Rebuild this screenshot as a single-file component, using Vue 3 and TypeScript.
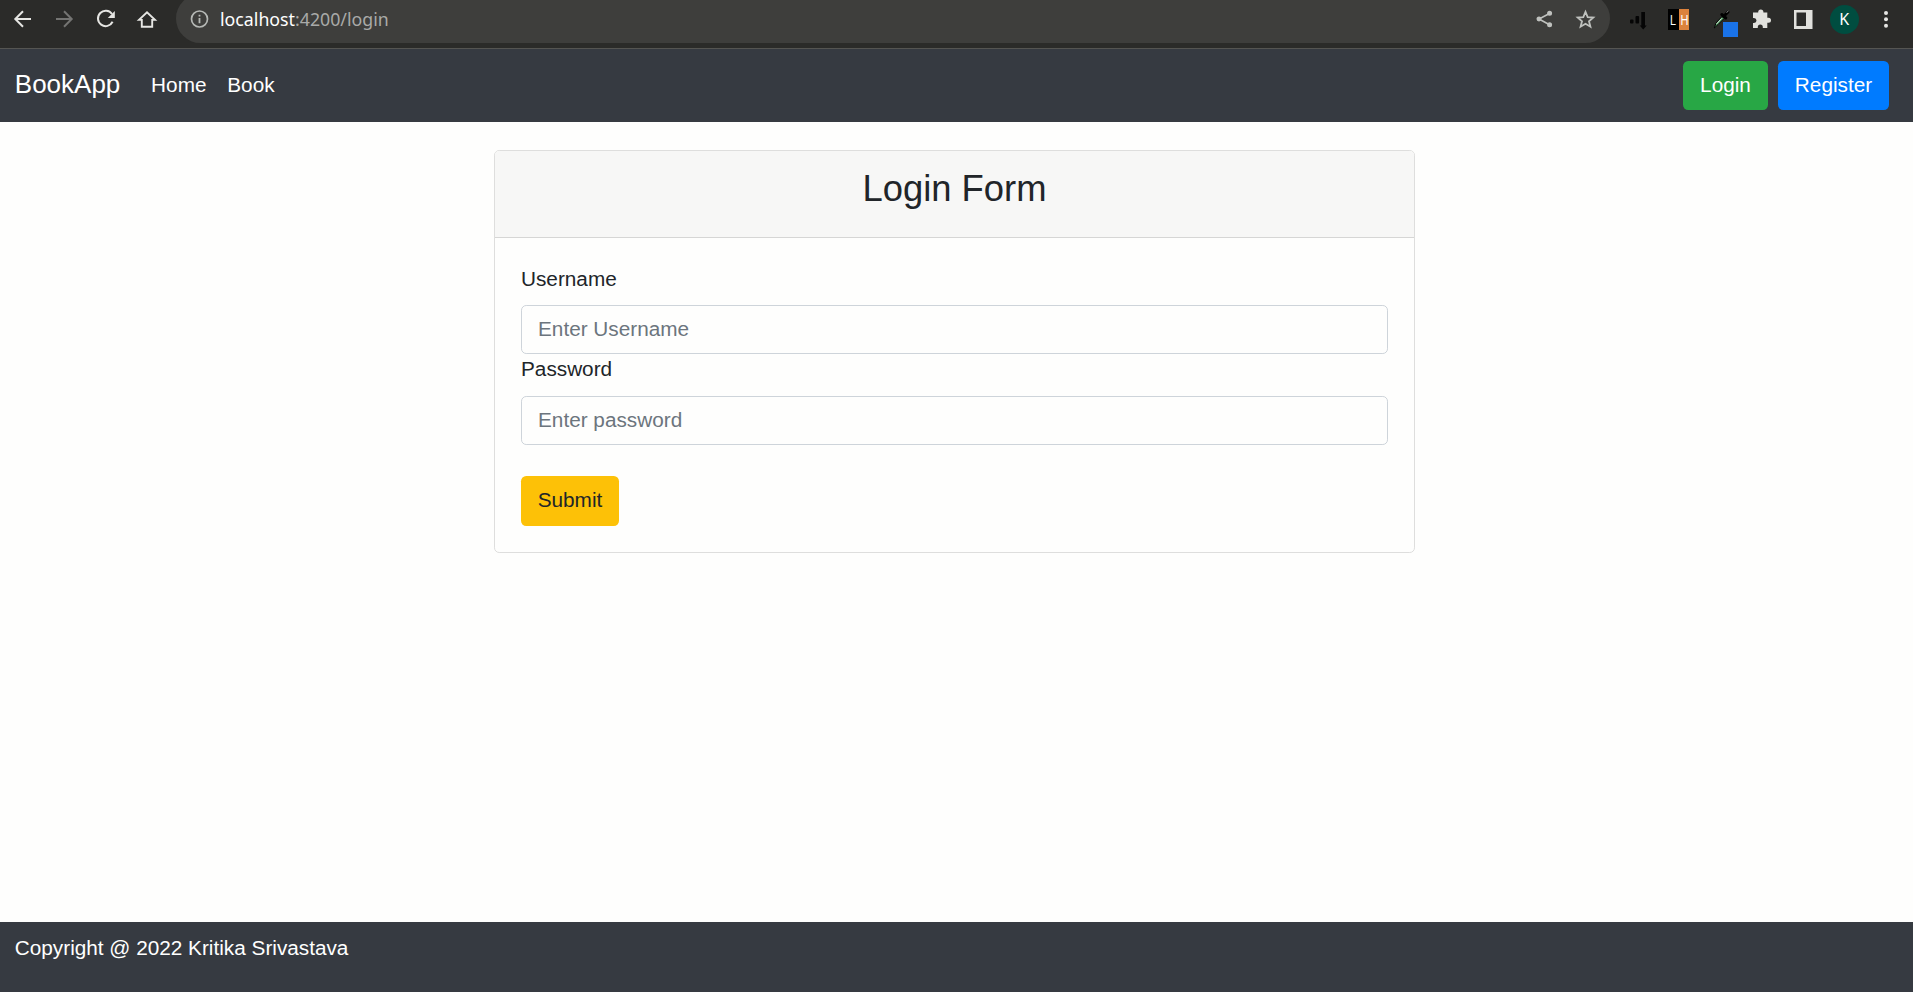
<script setup lang="ts">
import { ref } from 'vue'

const username = ref('')
const password = ref('')
const links: string[] = ['Home', 'Book']
</script>

<template>
  <div class="window">
    <div class="toolbar">
      <svg class="icons-left" width="176" height="48" viewBox="0 0 176 48" fill="none" stroke="#e6e6e3" stroke-width="2">
        <path d="M31 19H15.500M23 11.300L15.300 19L23 26.700" />
        <path d="M56 19H71.500M64 11.300L71.700 19L64 26.700" stroke="#747472" />
        <path d="M112 14A7.700 7.700 0 1 0 112.600 21.800" />
        <path d="M114.800 11V18H107.800Z" fill="#e6e6e3" stroke="none" />
        <path d="M139 19.900H141.800V26.800H152.200V19.900H155L147 12.200Z" stroke-width="1.900" />
      </svg>
      <div class="address">
        <svg width="20" height="20" viewBox="0 0 20 20">
          <circle cx="10.500" cy="10" r="8" fill="none" stroke="#b5b8b5" stroke-width="1.700" />
          <path d="M9.600 5.800H11.400V7.600H9.600ZM9.600 9H11.400V14.300H9.600Z" fill="#b5b8b5" />
        </svg>
        <span class="url"><b>localhost</b>:4200/login</span>
        <svg class="address-end" width="70" height="40" viewBox="1530 0 70 40">
          <g fill="#bfc1be" stroke="#bfc1be" stroke-width="1.600">
            <path d="M1549.500 13.500L1539 19L1549.500 24.800" fill="none" />
            <circle cx="1549.600" cy="13.300" r="1.700" /><circle cx="1539" cy="19" r="1.700" /><circle cx="1549.600" cy="24.800" r="1.700" />
          </g>
          <path d="M1585.500 11.800L1587.700 17.100L1593.300 17.500L1589 21.200L1590.400 26.700L1585.500 23.700L1580.600 26.700L1582 21.200L1577.700 17.500L1583.300 17.100Z" fill="none" stroke="#bfc1be" stroke-width="1.800" />
        </svg>
      </div>
      <svg class="extensions" width="303" height="48" viewBox="1610 0 303 48">
        <g fill="#050505">
          <rect x="1630" y="19.500" width="3.500" height="4" rx="1" /><rect x="1635.500" y="16" width="3.600" height="7.500" rx="1" />
          <path d="M1641.300 12H1645V25.500H1646.700L1643.200 29.500L1639.700 25.500H1641.300Z" />
        </g>
        <rect x="1668" y="9" width="11" height="21" fill="#000" /><rect x="1679" y="9" width="10" height="21" fill="#dc823c" />
        <text x="1670" y="25" textLength="6" lengthAdjust="spacingAndGlyphs" class="badge-text">L</text>
        <text x="1680.500" y="25" textLength="8" lengthAdjust="spacingAndGlyphs" class="badge-text">H</text>
        <path d="M1714.300 28L1716 23L1722 16.500L1724 18.500L1718 24.500Z" fill="#57a569" stroke="#050505" />
        <path d="M1716.500 24L1721.500 18.500" stroke="#cfded2" />
        <path d="M1721.800 14.500L1725.800 18M1724.500 15.500L1728 12" stroke="#000" stroke-width="3" stroke-linecap="round" />
        <path d="M1726.500 12.500L1728.500 11" stroke="#999" />
        <rect x="1723" y="22" width="15" height="15" fill="#1a73e8" />
        <path d="M1754 12.500H1758.200V12A2.600 2.600 0 0 1 1763.400 12V12.500H1767.300V17.700H1768.500A2.500 2.500 0 0 1 1768.500 22.700H1767.300V28H1762.800V27A2.500 2.500 0 0 0 1757.800 27V28H1753V23H1754A2.500 2.500 0 0 0 1754 18H1753V12.500Z" fill="#e1e1dd" />
        <path fill-rule="evenodd" d="M1794 10H1812.500V29H1794ZM1796.500 12.500V26H1806V12.500Z" fill="#e1e1dd" />
        <circle cx="1844.500" cy="19.500" r="14.500" fill="#004d40" />
        <text x="1844.300" y="25" class="avatar">K</text>
        <g fill="#e6e6e3"><circle cx="1886" cy="13" r="2" /><circle cx="1886" cy="19.300" r="2" /><circle cx="1886" cy="25.700" r="2" /></g>
      </svg>
    </div>

    <nav class="navbar">
      <a class="brand">BookApp</a>
      <a v-for="link in links" :key="link" class="nav-link">{{ link }}</a>
      <div class="actions">
        <button class="btn success">Login</button>
        <button class="btn primary">Register</button>
      </div>
    </nav>

    <main>
      <section class="card">
        <h3>Login Form</h3>
        <form @submit.prevent>
          <label for="user">Username</label>
          <input id="user" v-model="username" type="text" placeholder="Enter Username" />
          <label for="pass" class="tight">Password</label>
          <input id="pass" v-model="password" type="password" placeholder="Enter password" />
          <button class="btn warning">Submit</button>
        </form>
      </section>
    </main>
    <footer>Copyright @ 2022 Kritika Srivastava</footer>
  </div>
</template>

<style>
body { margin: 0; overflow: hidden; }
</style>

<style scoped>
* { box-sizing: border-box; }
.window {
  height: 992px;
  display: flex;
  flex-direction: column;
  background: #fefefd;
  color: #212529;
  font: 20.75px/31.2px "Liberation Sans", Arial, sans-serif;
}
.toolbar {
  height: 49px;
  flex: none;
  display: flex;
  align-items: flex-start;
  overflow: hidden;
  background: #2b2b29;
  border-bottom: 1px solid #555552;
}
.icons-left { flex: none; }
.address {
  width: 1434px;
  height: 49px;
  margin-top: -6px;
  display: flex;
  align-items: flex-start;
  padding: 6px 10px 0 13px;
  background: #3e3e3c;
  border-radius: 24.5px;
}
.address > svg:first-child { margin-top: 9px; }
.url {
  margin: 4px 0 0 11px;
  color: #a9aaa8;
  font: 17.75px/30px "Noto Sans", sans-serif;
}
.url b { color: #fff; font-weight: 400; }
.address-end { margin-left: auto; }
.extensions { flex: none; }
.badge-text { fill: #fff; font: 14px "Liberation Sans", sans-serif; }
.avatar { fill: #fff; font: 16px "Noto Sans", sans-serif; text-anchor: middle; }
.navbar {
  height: 73px;
  flex: none;
  display: flex;
  align-items: center;
  padding: 0 24px 0 14.8px;
  background: #363a41;
  color: #fff;
}
.brand { font-size: 26px; margin-right: 20.4px; padding-bottom: 2px; }
.nav-link { padding: 0 10.4px 2px; }
.actions { display: flex; gap: 10px; margin-left: auto; }
.btn {
  height: 49px;
  padding: 0 0 2px;
  border: 0;
  border-radius: 5.2px;
  font: inherit;
  color: #fff;
}
.success { width: 85px; background: #28a745; }
.primary { width: 111px; background: #007bff; }
main { flex: 1; padding-top: 28px; }
.card {
  width: 921px;
  height: 403px;
  margin-left: 494px;
  border: 1px solid #dededd;
  border-radius: 5.2px;
}
h3 {
  height: 87px;
  margin: 0;
  padding-top: 16px;
  border-bottom: 1px solid #d6d6d5;
  border-radius: 4px 4px 0 0;
  background: #f7f7f6;
  font-size: 36.4px;
  line-height: 43.7px;
  font-weight: 400;
  text-align: center;
}
form { display: flex; flex-direction: column; align-items: flex-start; padding: 25px 26px; }
label { height: 42px; }
.tight { line-height: 29.2px; }
input {
  width: 100%;
  height: 49px;
  flex: none;
  padding: 0 16px 2px;
  border: 1px solid #ced4da;
  border-radius: 5.2px;
  background: transparent;
  font: inherit;
}
input::placeholder { color: #6c757d; opacity: 1; }
.warning { width: 98px; height: 50px; margin-top: 31px; background: #fdc107; color: #212529; }
footer { height: 70px; flex: none; padding: 10px 14.8px; background: #363a41; color: #fff; }
</style>
